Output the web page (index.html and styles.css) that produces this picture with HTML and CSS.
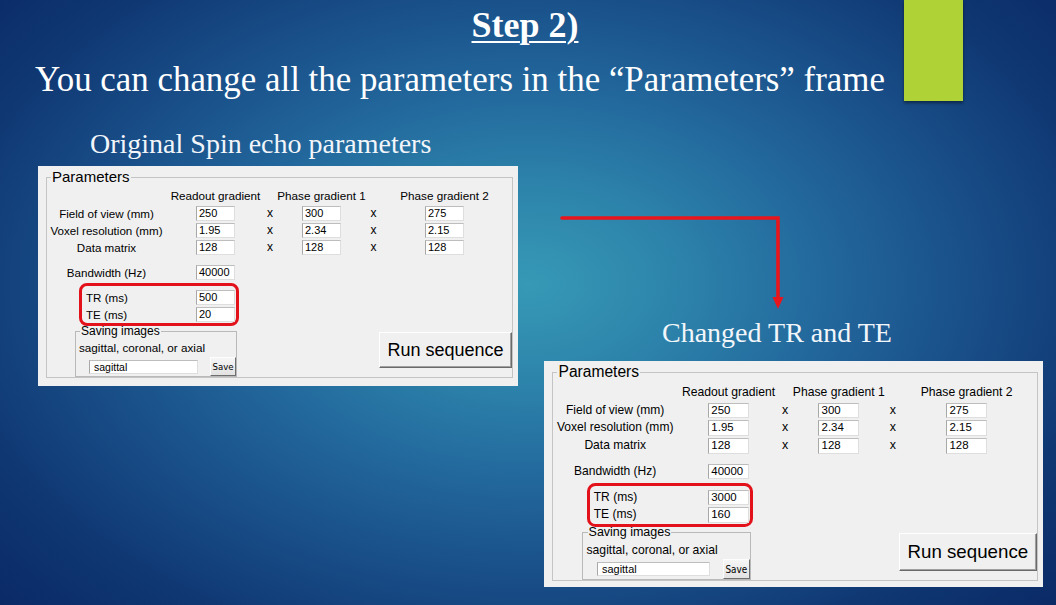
FILE: index.html
```html
<!DOCTYPE html>
<html lang="en">
<head>
<meta charset="utf-8">
<title>Step 2</title>
<link rel="stylesheet" href="styles.css">
</head>
<body>
<div class="slide">
  <div class="accent"></div>
  <h1 class="title">Step 2)</h1>
  <p class="subtitle">You can change all the parameters in the “Parameters” frame</p>

  <div class="content">
    <section class="col col-left">
      <h2 class="caption caption-left">Original Spin echo parameters</h2>
      <div class="panel">
        <fieldset class="group">
          <legend class="group-legend">Parameters</legend>
          <div class="table">
            <span class="cell"></span>
            <span class="head">Readout gradient</span>
            <span class="cell"></span>
            <span class="head">Phase gradient 1</span>
            <span class="cell"></span>
            <span class="head">Phase gradient 2</span>

            <span class="label">Field of view (mm)</span>
            <span class="field">250</span><span class="times">x</span>
            <span class="field">300</span><span class="times">x</span>
            <span class="field">275</span>

            <span class="label">Voxel resolution (mm)</span>
            <span class="field">1.95</span><span class="times">x</span>
            <span class="field">2.34</span><span class="times">x</span>
            <span class="field">2.15</span>

            <span class="label">Data matrix</span>
            <span class="field">128</span><span class="times">x</span>
            <span class="field">128</span><span class="times">x</span>
            <span class="field">128</span>
          </div>
          <div class="bw-row">
            <span class="label">Bandwidth (Hz)</span>
            <span class="field">40000</span>
          </div>
          <div class="highlight">
            <span class="label-left">TR (ms)</span><span class="field">500</span>
            <span class="label-left">TE (ms)</span><span class="field">20</span>
          </div>
          <div class="bottom-row">
            <fieldset class="subgroup">
              <legend class="sub-legend">Saving images</legend>
              <div class="sub-text">sagittal, coronal, or axial</div>
              <div class="save-row">
                <span class="field field-wide">sagittal</span>
                <span class="btn-save">Save</span>
              </div>
            </fieldset>
            <span class="btn-run">Run sequence</span>
          </div>
        </fieldset>
      </div>
    </section>

    <section class="col col-right">
      <h2 class="caption caption-right">Changed TR and TE</h2>
      <div class="panel panel-lg">
        <fieldset class="group">
          <legend class="group-legend">Parameters</legend>
          <div class="table">
            <span class="cell"></span>
            <span class="head">Readout gradient</span>
            <span class="cell"></span>
            <span class="head">Phase gradient 1</span>
            <span class="cell"></span>
            <span class="head">Phase gradient 2</span>

            <span class="label">Field of view (mm)</span>
            <span class="field">250</span><span class="times">x</span>
            <span class="field">300</span><span class="times">x</span>
            <span class="field">275</span>

            <span class="label">Voxel resolution (mm)</span>
            <span class="field">1.95</span><span class="times">x</span>
            <span class="field">2.34</span><span class="times">x</span>
            <span class="field">2.15</span>

            <span class="label">Data matrix</span>
            <span class="field">128</span><span class="times">x</span>
            <span class="field">128</span><span class="times">x</span>
            <span class="field">128</span>
          </div>
          <div class="bw-row">
            <span class="label">Bandwidth (Hz)</span>
            <span class="field">40000</span>
          </div>
          <div class="highlight">
            <span class="label-left">TR (ms)</span><span class="field">3000</span>
            <span class="label-left">TE (ms)</span><span class="field">160</span>
          </div>
          <div class="bottom-row">
            <fieldset class="subgroup">
              <legend class="sub-legend">Saving images</legend>
              <div class="sub-text">sagittal, coronal, or axial</div>
              <div class="save-row">
                <span class="field field-wide">sagittal</span>
                <span class="btn-save">Save</span>
              </div>
            </fieldset>
            <span class="btn-run">Run sequence</span>
          </div>
        </fieldset>
      </div>
    </section>
  </div>

  <svg class="arrow" width="1056" height="605" viewBox="0 0 1056 605" aria-hidden="true">
    <path d="M562 218 H778 V299" fill="none" stroke="#e8161c" stroke-width="3.6" stroke-linecap="round" stroke-linejoin="miter"/>
    <path d="M772.5 297 L783.5 297 L778 309 Z" fill="#e8161c"/>
  </svg>
</div>
</body>
</html>
```

FILE: styles.css
```css
* { box-sizing: border-box; }

html, body {
  margin: 0;
  padding: 0;
}

body {
  width: 1056px;
  height: 605px;
  overflow: hidden;
}

.slide {
  position: relative;
  width: 1056px;
  height: 605px;
  overflow: hidden;
  background:
    radial-gradient(ellipse 68% 78% at 50% 47%, #3799b6 0%, #2c82aa 22%, #22679c 42%, #184c86 64%, #0f3772 82%, #0a2a66 100%);
  font-family: "Liberation Serif", "Times New Roman", serif;
  color: #fff;
}

.accent {
  position: absolute;
  left: 904px;
  top: 0;
  width: 59px;
  height: 101px;
  background: #afd236;
  box-shadow: 0 2px 3px rgba(0, 0, 0, 0.45);
}

.title {
  margin: 0;
  padding: 5px 6px 0 0;
  font-size: 36px;
  line-height: 40px;
  font-weight: bold;
  text-align: center;
  text-decoration: underline;
  text-decoration-thickness: 2px;
  text-underline-offset: 4px;
  color: #fff;
}

.subtitle {
  margin: 13px 0 0 35px;
  font-size: 34.9px;
  line-height: 44px;
  white-space: nowrap;
  color: #fff;
}

.content {
  display: grid;
  grid-template-columns: 480px 499px;
  column-gap: 26px;
  padding-left: 38px;
  align-items: start;
}

.caption {
  margin: 0;
  font-weight: normal;
  font-size: 28px;
  line-height: 32px;
  white-space: nowrap;
  color: #f2f6fa;
}

.caption-left {
  margin: 26px 0 6px 52px;
}

.caption-right {
  margin: 215px 0 12px 118px;
}

/* ---------- GUI panel ---------- */
.panel {
  width: 480px;
  padding: 3px 5px 8px 8px;
  background: #f0f0f0;
  font-family: "Liberation Sans", Arial, sans-serif;
  color: #000;
}

.panel-lg {
  zoom: 1.04;
  padding-bottom: 6px;
}

.group {
  margin: 0;
  padding: 3px 0 0 0;
  border: 1px solid #c4c4c4;
  width: 467px;
  min-width: 0;
}

.group-legend {
  margin-left: 4px;
  padding: 0 1px;
  font-size: 15px;
  line-height: 16px;
}

.table {
  display: grid;
  grid-template-columns: 119px 99px 10px 93px 11px 131px;
  grid-template-rows: 16px 15px 15px 15px;
  row-gap: 2px;
  align-items: center;
}

.head {
  font-size: 11.7px;
  line-height: 16px;
  text-align: center;
  white-space: nowrap;
}

.label {
  font-size: 11.6px;
  line-height: 15px;
  text-align: center;
  white-space: nowrap;
}

.times {
  font-size: 12px;
  line-height: 15px;
  text-align: center;
}

.field {
  justify-self: center;
  display: block;
  width: 39px;
  height: 15px;
  padding-left: 2px;
  background: #fff;
  border: 1px solid #dedede;
  border-top-color: #bdbdbd;
  border-left-color: #a8a8a8;
  font-size: 11px;
  line-height: 13px;
  white-space: nowrap;
}

.bw-row {
  display: grid;
  grid-template-columns: 119px 99px;
  margin-top: 10px;
  align-items: center;
}

.highlight {
  position: relative;
  z-index: 1;
  display: grid;
  grid-template-columns: 110px 39px;
  grid-template-rows: 15px 15px;
  row-gap: 2px;
  align-items: center;
  width: 160px;
  margin: 3px 0 0 32px;
  padding: 4px 1px 1px 4px;
  border: 3px solid #e3121a;
  border-radius: 8px;
}

.label-left {
  font-size: 11.6px;
  line-height: 15px;
  white-space: nowrap;
}

.highlight .field {
  justify-self: start;
}

.bottom-row {
  display: flex;
  align-items: flex-start;
  margin-top: -2px;
}

.subgroup {
  margin: 0 0 0 28px;
  padding: 3px 0 0 3px;
  width: 162px;
  min-width: 0;
  border: 1px solid #b9b9b9;
}

.sub-legend {
  margin-left: 1px;
  padding: 0 1px;
  font-size: 12px;
  line-height: 14px;
}

.sub-text {
  font-size: 11.7px;
  line-height: 14px;
  white-space: nowrap;
}

.save-row {
  display: flex;
  align-items: center;
  justify-content: space-between;
  height: 19px;
  margin-top: 2px;
}

.field-wide {
  width: 109px;
  height: 14px;
  margin-left: 10px;
  padding-left: 4px;
  font-size: 10.5px;
  line-height: 12px;
}

.btn-save {
  display: flex;
  align-items: center;
  justify-content: center;
  width: 26px;
  height: 19px;
  background: linear-gradient(#f6f6f6, #e2e2e2);
  border: 1px solid;
  border-color: #fdfdfd #6f6f6f #6f6f6f #fdfdfd;
  font-size: 9.5px;
  font-family: "DejaVu Sans Condensed", "Liberation Sans", sans-serif;
}

.btn-run {
  display: flex;
  align-items: center;
  justify-content: center;
  margin: 8px 0 0 auto;
  width: 133px;
  height: 36px;
  background: #f0f0f0;
  border: 1px solid;
  border-color: #ffffff #6a6a6a #6a6a6a #ffffff;
  box-shadow: inset -1px -1px 0 #a0a0a0;
  font-size: 18px;
  white-space: nowrap;
}

.arrow {
  position: absolute;
  left: 0;
  top: 0;
  pointer-events: none;
}
```
